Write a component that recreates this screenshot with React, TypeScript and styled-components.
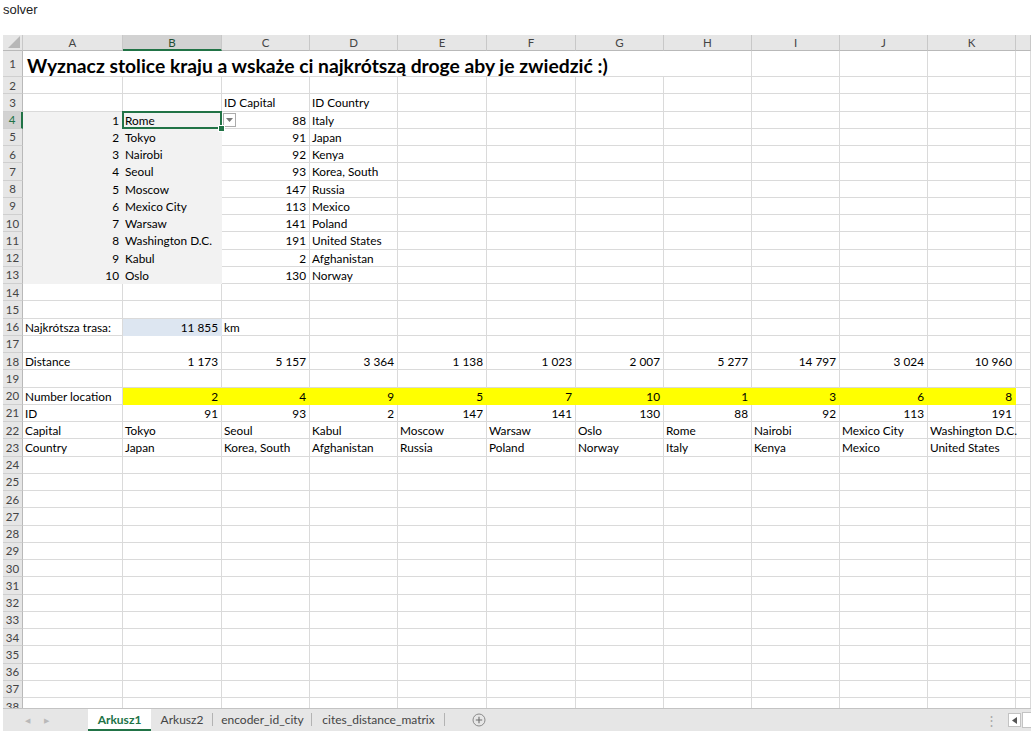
import React from 'react'
import styled, { createGlobalStyle } from 'styled-components'

const GREEN = '#217346'
const GRID = '#dadada'
const HEAD = '#e6e6e6'
const GREY_FILL = '#f2f2f2'
const BLUE_FILL = '#dde6f1'
const YELLOW = '#ffff00'

const COLS = ['A', 'B', 'C', 'D', 'E', 'F', 'G', 'H', 'I', 'J', 'K', 'L']

type Cell = { v?: string; right?: boolean; fill?: string }

const GlobalStyle = createGlobalStyle`
  html, body {
    margin: 0;
    padding: 0;
    background: #fff;
  }
  body {
    font-family: "Liberation Sans", Arial, sans-serif;
  }
`

// ---------- data ----------

const capitals: [number, string, number, string][] = [
    [1, 'Rome', 88, 'Italy'],
    [2, 'Tokyo', 91, 'Japan'],
    [3, 'Nairobi', 92, 'Kenya'],
    [4, 'Seoul', 93, 'Korea, South'],
    [5, 'Moscow', 147, 'Russia'],
    [6, 'Mexico City', 113, 'Mexico'],
    [7, 'Warsaw', 141, 'Poland'],
    [8, 'Washington D.C.', 191, 'United States'],
    [9, 'Kabul', 2, 'Afghanistan'],
    [10, 'Oslo', 130, 'Norway'],
]

const route = {
    distance: ['1 173', '5 157', '3 364', '1 138', '1 023', '2 007', '5 277', '14 797', '3 024', '10 960'],
    location: ['2', '4', '9', '5', '7', '10', '1', '3', '6', '8'],
    id: ['91', '93', '2', '147', '141', '130', '88', '92', '113', '191'],
    capital: ['Tokyo', 'Seoul', 'Kabul', 'Moscow', 'Warsaw', 'Oslo', 'Rome', 'Nairobi', 'Mexico City', 'Washington D.C.'],
    country: ['Japan', 'Korea, South', 'Afghanistan', 'Russia', 'Poland', 'Norway', 'Italy', 'Kenya', 'Mexico', 'United States'],
}

const nbsp = (s: string) => s.replace(/ /g, '\u00a0')

const sheet: Record<number, Record<string, Cell>> = {}

sheet[3] = { C: { v: 'ID Capital' }, D: { v: 'ID Country' } }
capitals.forEach(([n, city, id, country], i) => {
    sheet[4 + i] = {
        A: { v: String(n), right: true, fill: GREY_FILL },
        B: { v: city, fill: GREY_FILL },
        C: { v: String(id), right: true },
        D: { v: country },
    }
})
sheet[16] = {
    A: { v: 'Najkrótsza trasa:' },
    B: { v: nbsp('11 855'), right: true, fill: BLUE_FILL },
    C: { v: 'km' },
}

const rowOf = (label: string, values: string[], right: boolean, fill?: string) => {
    const row: Record<string, Cell> = { A: { v: label } }
    values.forEach((v, i) => {
        row[COLS[i + 1]] = { v: nbsp(v), right, fill }
    })
    return row
}

sheet[18] = rowOf('Distance', route.distance, true)
sheet[20] = rowOf('Number location', route.location, true, YELLOW)
sheet[21] = rowOf('ID', route.id, true)
sheet[22] = rowOf('Capital', route.capital, false)
sheet[23] = rowOf('Country', route.country, false)

const ROWS = Array.from({ length: 38 }, (_, i) => i + 1)

// ---------- components ----------

function App() {
    return (
        <Page>
            <GlobalStyle />
            <Caption>solver</Caption>

            <Sheet>
                <Corner>
                    <svg width="12" height="12" viewBox="0 0 12 12">
                        <polygon points="12,0 12,12 0,12" fill="#b7b7b7" />
                    </svg>
                </Corner>
                {COLS.map(c => (
                    // column L is only partly on screen, its letter sits off the edge
                    <ColHead key={c} $active={c === 'B'}>{c === 'L' ? '' : c}</ColHead>
                ))}

                {ROWS.map(r => (
                    <React.Fragment key={r}>
                        <RowHead $active={r === 4}>{r}</RowHead>
                        {r === 1 ? (
                            <>
                                <Title>Wyznacz stolice kraju a wskaże ci najkrótszą droge aby je zwiedzić :)</Title>
                                {COLS.slice(7).map(c => <GridCell key={c} />)}
                            </>
                        ) : (
                            COLS.map(c => {
                                const cell = sheet[r]?.[c]
                                const selected = r === 4 && c === 'B'
                                return (
                                    <GridCell
                                        key={c}
                                        $right={cell?.right}
                                        $fill={cell?.fill}
                                        $selected={selected}
                                    >
                                        {cell?.v}
                                        {selected && (
                                            <>
                                                <FillHandle />
                                                <DropButton>
                                                    <svg width="7" height="4" viewBox="0 0 7 4">
                                                        <polygon points="0,0 7,0 3.5,4" fill="#777" />
                                                    </svg>
                                                </DropButton>
                                            </>
                                        )}
                                    </GridCell>
                                )
                            })
                        )}
                    </React.Fragment>
                ))}
            </Sheet>

            <TabBar>
                <TabNav>
                    <NavArrow>◀</NavArrow>
                    <NavArrow>▶</NavArrow>
                </TabNav>
                <Tab $w={63} $active>Arkusz1</Tab>
                <Tab $w={62}>Arkusz2</Tab>
                <Tab $w={99}>encoder_id_city</Tab>
                <Tab $w={133}>cites_distance_matrix</Tab>
                <AddSheet>
                    <svg width="14" height="14" viewBox="0 0 14 14">
                        <circle cx="7" cy="7" r="6" fill="none" stroke="#8a8a8a" strokeWidth="1" />
                        <path d="M7 3.8v6.4M3.8 7h6.4" stroke="#6d6d6d" strokeWidth="1.1" />
                    </svg>
                </AddSheet>
                <Splitter>⋮</Splitter>
                <ScrollButton>
                    <svg width="5" height="7" viewBox="0 0 5 7">
                        <polygon points="5,0 5,7 0,3.5" fill="#555" />
                    </svg>
                </ScrollButton>
                <ScrollTrack />
            </TabBar>
        </Page>
    )
}

export default App

const Page = styled.div`
    width: 1031px;
    height: 731px;
    display: flex;
    flex-direction: column;
    overflow: hidden;
`

const Caption = styled.div`
    height: 36px;
    padding: 1px 0 0 3px;
    font-size: 13px;
    line-height: 18px;
    color: #222;
    box-sizing: border-box;
`

const Sheet = styled.div`
    margin-left: 3px;
    height: 673px;
    flex: none;
    display: grid;
    grid-template-columns: 20px 100px 99px 88px 88px 89px 89px 88px 88px 88px 88px 88px 1fr;
    grid-template-rows: 16px 26px repeat(37, 17.25px);
    overflow: hidden;
    background: #fff;
    font-family: Lato, "Liberation Sans", sans-serif;
    font-size: 11.8px;
    color: #000;
`

const Corner = styled.div`
    background: ${HEAD};
    border-right: 1px solid #c8c8c8;
    border-bottom: 1px solid #b9b9b9;
    box-sizing: border-box;
    display: flex;
    align-items: flex-end;
    justify-content: flex-end;
    padding: 0 2px 2px 0;
`

const ColHead = styled.div<{ $active?: boolean }>`
    background: ${p => (p.$active ? '#d2d2d2' : HEAD)};
    border-right: 1px solid #c8c8c8;
    border-bottom: ${p => (p.$active ? `2px solid ${GREEN}` : '1px solid #b9b9b9')};
    box-sizing: border-box;
    display: flex;
    align-items: center;
    justify-content: center;
    font-size: 11.5px;
    color: ${p => (p.$active ? '#1f4e33' : '#444')};
`

const RowHead = styled.div<{ $active?: boolean }>`
    background: ${p => (p.$active ? '#d2d2d2' : HEAD)};
    border-right: ${p => (p.$active ? `2px solid ${GREEN}` : '1px solid #b9b9b9')};
    border-bottom: 1px solid #cfcfcf;
    box-sizing: border-box;
    display: flex;
    align-items: center;
    justify-content: center;
    font-size: 11.5px;
    color: ${p => (p.$active ? GREEN : '#444')};
`

const GridCell = styled.div<{ $right?: boolean; $fill?: string; $selected?: boolean }>`
    position: ${p => (p.$selected ? 'relative' : 'static')};
    z-index: ${p => (p.$selected ? 2 : 'auto')};
    background: ${p => p.$fill || 'transparent'};
    border-right: 1px solid ${p => p.$fill || GRID};
    border-bottom: 1px solid ${p => p.$fill || GRID};
    box-sizing: border-box;
    display: flex;
    align-items: center;
    justify-content: ${p => (p.$right ? 'flex-end' : 'flex-start')};
    padding: 1px 3px 0 2px;
    white-space: nowrap;

    ${p => p.$selected && `
        &::after {
            content: '';
            position: absolute;
            left: -1px;
            top: -1px;
            right: -1px;
            bottom: -1px;
            border: 2px solid ${GREEN};
            pointer-events: none;
        }
    `}
`

const FillHandle = styled.span`
    position: absolute;
    right: -4px;
    bottom: -4px;
    width: 5px;
    height: 5px;
    background: ${GREEN};
    border: 1px solid #fff;
    z-index: 3;
`

const DropButton = styled.span`
    position: absolute;
    left: calc(100% + 2px);
    top: 1px;
    width: 13px;
    height: 14px;
    box-sizing: border-box;
    background: #fff;
    border: 1px solid #ababab;
    display: flex;
    align-items: center;
    justify-content: center;
`

const Title = styled.div`
    grid-column: span 7;
    border-bottom: 1px solid ${GRID};
    display: flex;
    align-items: center;
    padding: 3px 4px 0 4px;
    font-size: 19.3px;
    font-weight: 700;
    white-space: nowrap;
`

const TabBar = styled.div`
    margin-left: 3px;
    height: 22px;
    flex: none;
    display: flex;
    align-items: stretch;
    background: #e6e6e6;
    border-top: 1px solid #c3c3c3;
    font-family: Lato, "Liberation Sans", sans-serif;
    font-size: 12px;
    color: #444;
`

const TabNav = styled.div`
    width: 85px;
    display: flex;
    align-items: center;
    gap: 14px;
    padding-left: 22px;
    box-sizing: border-box;
`

const NavArrow = styled.span`
    font-size: 7px;
    color: #b9b9b9;
`

const Tab = styled.div<{ $w: number; $active?: boolean }>`
    position: relative;
    width: ${p => p.$w}px;
    display: flex;
    align-items: center;
    justify-content: center;
    box-sizing: border-box;
    background: ${p => (p.$active ? '#fff' : 'transparent')};
    color: ${p => (p.$active ? GREEN : '#444')};
    font-weight: ${p => (p.$active ? 700 : 400)};
    border-bottom: 2px solid ${p => (p.$active ? GREEN : 'transparent')};

    ${p => !p.$active && `
        &::after {
            content: '';
            position: absolute;
            right: 0;
            top: 4px;
            bottom: 3px;
            border-right: 1px solid #b3b3b3;
        }
    `}
`

const AddSheet = styled.div`
    margin-left: 27px;
    display: flex;
    align-items: center;
`

const Splitter = styled.div`
    margin-left: auto;
    margin-right: 10px;
    display: flex;
    align-items: center;
    color: #a8a8a8;
    font-size: 13px;
`

const ScrollButton = styled.div`
    width: 13px;
    height: 14px;
    align-self: center;
    box-sizing: border-box;
    background: #fff;
    border: 1px solid #c3c3c3;
    display: flex;
    align-items: center;
    justify-content: center;
`

const ScrollTrack = styled.div`
    width: 8px;
    height: 14px;
    align-self: center;
    background: #fff;
    border: 1px solid #c3c3c3;
    border-right: none;
    margin-left: 1px;
`
